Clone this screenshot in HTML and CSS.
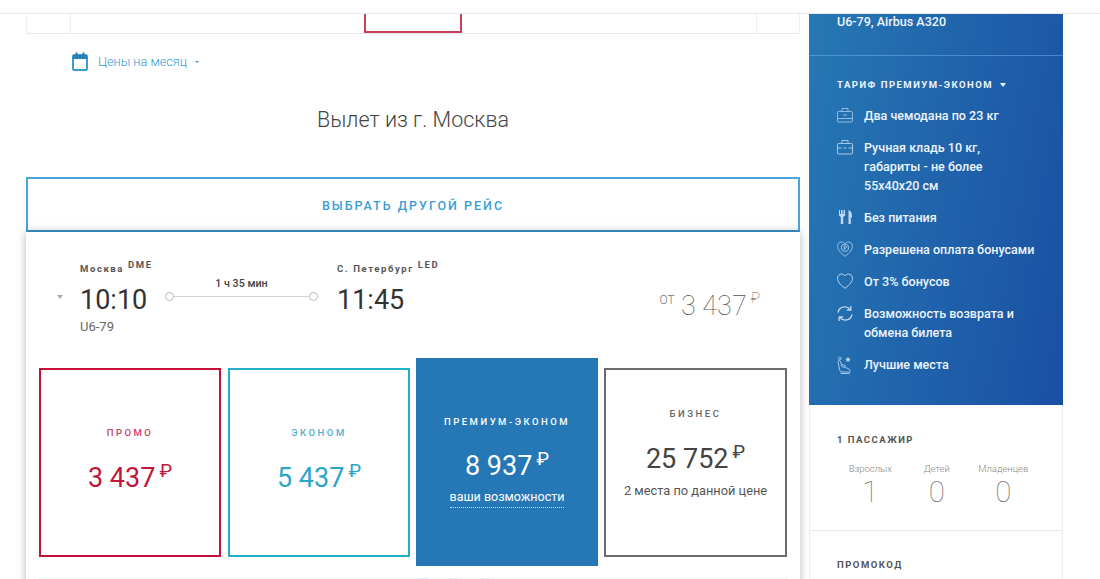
FILE: index.html
```html
<!DOCTYPE HTML>
<html>
<head>
    <meta charset="utf-8">
    <title>Выбор рейса</title>
    <link rel="stylesheet" href="styles.css">
</head>
<body>
    <div class="topBar"></div>
    <div class="page">
        <div class="main">
            <div class="dateRow">
                <div class="dateCell dateSmall"></div>
                <div class="dateCell dateWide"></div>
                <div class="dateCell dateActive"></div>
                <div class="dateCell dateWide2"></div>
                <div class="dateCell dateLast"></div>
            </div>

            <div class="monthLink">
                <svg class="calIcon" width="16" height="19" viewBox="0 0 16 19">
                    <rect x="1" y="3" width="14" height="15" rx="1.5" fill="none" stroke="#3a9bd0" stroke-width="2"/>
                    <rect x="1" y="3" width="14" height="4" fill="#2a7fb8"/>
                    <rect x="3.500" y="0.500" width="2" height="3" fill="#2a7fb8"/>
                    <rect x="10.500" y="0.500" width="2" height="3" fill="#2a7fb8"/>
                </svg>
                <span>Цены на месяц</span>
                <i class="caret"></i>
            </div>

            <h2 class="title">Вылет из г. Москва</h2>

            <button class="otherBtn">ВЫБРАТЬ ДРУГОЙ РЕЙС</button>

            <div class="flightCard">
                <div class="flightRow">
                    <i class="flightCaret"></i>
                    <div class="point">
                        <div class="city">Москва <sup>DME</sup></div>
                        <div class="time">10:10</div>
                        <div class="flightNo">U6-79</div>
                    </div>
                    <div class="route">
                        <div class="duration">1 ч 35 мин</div>
                        <div class="routeLine"></div>
                    </div>
                    <div class="point">
                        <div class="city">С. Петербург <sup>LED</sup></div>
                        <div class="time">11:45</div>
                    </div>
                    <div class="fromPrice"><small>ОТ</small> 3 437<sup>₽</sup></div>
                </div>

                <div class="tariffs">
                    <div class="tariff promo">
                        <div class="tariffName">ПРОМО</div>
                        <div class="tariffPrice">3 437<sup>₽</sup></div>
                    </div>
                    <div class="tariff econom">
                        <div class="tariffName">ЭКОНОМ</div>
                        <div class="tariffPrice">5 437<sup>₽</sup></div>
                    </div>
                    <div class="tariff premium">
                        <div class="tariffName">ПРЕМИУМ-ЭКОНОМ</div>
                        <div class="tariffPrice">8 937<sup>₽</sup></div>
                        <div class="tariffLink">ваши возможности</div>
                    </div>
                    <div class="tariff business">
                        <div class="tariffName">БИЗНЕС</div>
                        <div class="tariffPrice">25 752<sup>₽</sup></div>
                        <div class="tariffNote">2 места по данной цене</div>
                    </div>
                </div>
                <div class="cardBottom">
                    <span class="dot1"></span>
                    <span class="dot2"></span>
                    <span class="dot3"></span>
                </div>
            </div>
        </div>

        <div class="side">
            <div class="sideBlue">
                <div class="sideFlight">U6-79, Airbus A320</div>
                <div class="sideTariff">
                    <div class="sideHead">ТАРИФ ПРЕМИУМ-ЭКОНОМ <i class="headCaret"></i></div>
                    <ul class="options">
                        <li>
                            <svg width="16" height="16" viewBox="0 0 16 16" fill="none" stroke="#8fb9e0">
                                <rect x="0.500" y="4.500" width="15" height="10.500" rx="1"/>
                                <path d="M5 4.500V1.500h6v3M0.500 11.500h15M6 8h4"/>
                            </svg>
                            <span>Два чемодана по 23 кг</span>
                        </li>
                        <li>
                            <svg width="16" height="16" viewBox="0 0 16 16" fill="none" stroke="#a5c8e8">
                                <rect x="0.500" y="4.500" width="15" height="10.500" rx="1"/>
                                <path d="M5 4.500V1.500h6v3M0.500 9h4M11.500 9h4M6.500 9h3"/>
                            </svg>
                            <span>Ручная кладь 10 кг,<br>габариты - не более<br>55х40х20 см</span>
                        </li>
                        <li>
                            <svg width="16" height="16" viewBox="0 0 16 16" fill="#c3d9ef">
                                <path d="M2 1h1v4h1V1h1.500v4h1V1H8v5.500L6.200 8v7H3.800V8L2 6.500zM11.500 15V1c2 .5 3.500 2.500 3.500 6v1.500h-1.200V15z"/>
                            </svg>
                            <span>Без питания</span>
                        </li>
                        <li>
                            <svg width="16" height="16" viewBox="0 0 16 16" fill="none" stroke="#a5c8e8" stroke-width="0.900">
                                <path d="M8 15.300C2.800 11.500 0.600 8.300 0.600 5.200 0.600 2.800 2.300 1 4.500 1 6 1 7.300 1.700 8 2.900 8.700 1.700 10 1 11.500 1c2.200 0 3.900 1.800 3.900 4.200 0 3.100-2.200 6.300-7.400 10.100z"/>
                                <circle cx="8" cy="6.800" r="3.700"/>
                                <path d="M7.200 9V5h1.100a1.100 1.100 0 0 1 0 2.300H7.200"/>
                            </svg>
                            <span>Разрешена оплата бонусами</span>
                        </li>
                        <li>
                            <svg width="16" height="16" viewBox="0 0 16 16" fill="none" stroke="#c3d9ef">
                                <path d="M8 15.300C2.800 11.500 0.600 8.300 0.600 5.200 0.600 2.800 2.300 1 4.500 1 6 1 7.300 1.700 8 2.900 8.700 1.700 10 1 11.500 1c2.200 0 3.900 1.800 3.900 4.200 0 3.100-2.200 6.300-7.400 10.100z"/>
                            </svg>
                            <span>От 3% бонусов</span>
                        </li>
                        <li>
                            <svg width="16" height="17" viewBox="0 0 17 17" fill="none" stroke="#c3d9ef" stroke-width="1.400">
                                <path d="M1 7.500C1.700 4 4.700 1.500 8.300 1.500c2.500 0 4.500 1 5.900 2.800M16 9.500c-.7 3.500-3.700 6-7.300 6-2.500 0-4.500-1-5.900-2.800"/>
                                <path d="M14.700 0.500v4.300h-4.200M2.300 16.500v-4.300h4.200"/>
                            </svg>
                            <span>Возможность возврата и<br>обмена билета</span>
                        </li>
                        <li>
                            <svg width="16" height="18" viewBox="0 0 16 18" fill="none" stroke="#a5c8e8">
                                <circle cx="2.800" cy="2.500" r="1.300"/>
                                <path d="M1 5.500c0-1 2-1.500 2.500 0l1.500 5 3 1c1.500.5 4 1 5 2.500.5 1 0 2-1 2H5c-1 0-2-.7-2.300-2L1 5.500zM5 8.500l4 1.500M4 16.500v1h8.500v-1"/>
                                <path d="M11 0.700l.8 1.800 1.900.2-1.400 1.300.4 1.900-1.700-1-1.700 1 .4-1.900-1.400-1.300 1.900-.2z" fill="#c3d9ef" stroke="none"/>
                            </svg>
                            <span>Лучшие места</span>
                        </li>
                    </ul>
                </div>
            </div>

            <div class="sideBlock passengers">
                <div class="blockHead">1 ПАССАЖИР</div>
                <div class="paxRow">
                    <div class="pax"><span>Взрослых</span><b>1</b></div>
                    <div class="pax"><span>Детей</span><b>0</b></div>
                    <div class="pax"><span>Младенцев</span><b>0</b></div>
                </div>
            </div>
            <div class="sideBlock promoBlock">
                <div class="blockHead">ПРОМОКОД</div>
            </div>
        </div>
    </div>
</body>
</html>
```

FILE: styles.css
```css
html, body {
    margin: 0;
    height: 579px;
    overflow: hidden;
    background: #fff;
    font-family: Roboto, "Liberation Sans", sans-serif;
    color: #444;
}

.topBar {
    height: 13px;
    border-bottom: 1px solid #e8e8e8;
}

.page {
    display: flex;
    padding-left: 26px;
}

/* left column */
.main {
    width: 774px;
    flex: none;
}

.dateRow {
    display: flex;
    height: 19px;
    border-bottom: 1px solid #e8e8e8;
    border-left: 1px solid #eee;
    border-right: 1px solid #eee;
}

.dateCell {
    border-right: 1px solid #eee;
}

.dateSmall { width: 43px; }
.dateWide { width: 293px; border-right: 0; }
.dateActive {
    width: 94px;
    border: 2px solid #c9405f;
    border-top: 0;
    height: 17px;
}
.dateWide2 { width: 294px; }
.dateLast { flex: 1; border-right: 0; }

.monthLink {
    display: flex;
    align-items: center;
    height: 19px;
    margin: 18px 0 0 46px;
    font-size: 12.700px;
    font-weight: 300;
    color: #3a9bd6;
}

.calIcon { margin-right: 10px; }

.caret {
    width: 0;
    height: 0;
    margin-left: 8px;
    border: 2.500px solid transparent;
    border-top-color: #3a9bd6;
    border-bottom: 0;
}

.title {
    margin: 35px 0 0;
    height: 28px;
    text-align: center;
    font-size: 21.500px;
    line-height: 28px;
    font-weight: 300;
    color: #444;
}

.otherBtn {
    display: block;
    box-sizing: border-box;
    width: 774px;
    height: 55px;
    margin-top: 43px;
    padding-top: 2px;
    border: 2px solid #47a5d8;
    border-bottom-color: #3a95c6;
    background: #fff;
    font-family: Roboto, sans-serif;
    font-size: 12.500px;
    font-weight: 500;
    letter-spacing: 2px;
    color: #3a9ed6;
}

.flightCard {
    height: 360px;
    background: #fff;
    box-shadow: 0 0 9px rgba(0, 0, 0, 0.28);
}

.flightRow {
    display: flex;
    height: 126px;
    box-sizing: border-box;
    padding: 28px 0 0 54px;
    position: relative;
}

.flightCaret {
    position: absolute;
    left: 31px;
    top: 63px;
    width: 0;
    height: 0;
    border: 3px solid transparent;
    border-top: 4px solid #aaa;
    border-bottom: 0;
}

.point { width: 85px; }

.city {
    font-size: 9.500px;
    line-height: 18px;
    font-weight: 700;
    letter-spacing: 1.600px;
    color: #555;
    white-space: nowrap;
}

.city sup {
    font-size: 9.500px;
    line-height: 0;
    vertical-align: 4px;
}

.time {
    font-size: 27px;
    line-height: 31px;
    margin-top: 7px;
    color: #333;
}

.flightNo {
    margin-top: 3px;
    font-size: 13px;
    line-height: 15px;
    color: #666;
}

.route {
    width: 153px;
    margin-right: 19px;
    text-align: center;
}

.duration {
    margin-top: 17px;
    font-size: 10.700px;
    line-height: 13px;
    font-weight: 500;
    color: #444;
}

.routeLine {
    position: relative;
    height: 1px;
    margin-top: 6px;
    background: #d5d5d5;
}

.routeLine:before, .routeLine:after {
    content: "";
    position: absolute;
    top: -4px;
    width: 7px;
    height: 7px;
    border: 1px solid #bbb;
    border-radius: 50%;
    background: #fff;
}

.routeLine:before { left: 0; }
.routeLine:after { right: 0; }

.fromPrice {
    margin-left: auto;
    margin-right: 40px;
    margin-top: 25px;
    height: 30px;
    font-size: 27px;
    line-height: 30px;
    font-weight: 100;
    color: #555;
    white-space: nowrap;
}

.fromPrice small {
    font-size: 12px;
    font-weight: 300;
    vertical-align: 11px;
    color: #777;
}

.fromPrice sup {
    font-size: 15px;
    line-height: 0;
    vertical-align: 12px;
    margin-left: 4px;
}

.tariffs {
    display: flex;
    align-items: center;
    gap: 6px;
    padding-left: 13px;
    height: 208px;
}

.tariff {
    box-sizing: border-box;
    width: 182px;
    height: 189px;
    padding-bottom: 2px;
    border: 2px solid;
    display: flex;
    flex-direction: column;
    align-items: center;
    justify-content: center;
}

.tariffName {
    font-size: 9.500px;
    line-height: 12px;
    letter-spacing: 2.500px;
    font-weight: 500;
}

.tariffPrice {
    margin-top: 22px;
    font-size: 27px;
    line-height: 34px;
    white-space: nowrap;
}

.tariffPrice sup {
    font-size: 19px;
    line-height: 0;
    vertical-align: 10px;
    margin-left: 4px;
}

.promo { border-color: #c5103a; color: #c0163c; }
.promo .tariffName { color: #c8405f; }
.econom { margin-left: 1px; border-color: #20aecb; color: #2ba6c6; }
.econom .tariffName { color: #4bb0cd; }

.premium {
    height: 208px;
    padding-bottom: 0;
    border-color: #2677b5;
    background: #2677b5;
    color: #fff;
}

.premium .tariffPrice { margin-top: 21px; }

.tariffLink {
    margin-top: 5px;
    padding-bottom: 1px;
    border-bottom: 1px dotted #cfe0f0;
    font-size: 12.500px;
    line-height: 18px;
}

.business {
    width: 183px;
    padding-bottom: 17px;
    border-color: #6b6b6b;
    color: #444;
}

.business .tariffName { color: #666; }

.tariffNote {
    margin-top: 6px;
    font-size: 12.800px;
    line-height: 18px;
    color: #555;
}

.cardBottom {
    display: flex;
    margin: 12px 12px 0;
    height: 1px;
    background: #eef6fb;
}

.cardBottom span {
    height: 1px;
    background: #dcebf6;
}

.dot1 { width: 10px; margin-left: 380px; }
.dot2 { width: 8px; margin-left: 22px; }
.dot3 { width: 8px; margin-left: 24px; }

/* right column */
.side {
    box-sizing: border-box;
    width: 254px;
    flex: none;
    margin-left: 9px;
}

.sideBlue {
    height: 391px;
    background: linear-gradient(100deg, #2678b4, #1a4fa3);
    color: #eef4fb;
}

.sideFlight {
    height: 42px;
    box-sizing: border-box;
    padding-left: 28px;
    font-size: 12.550px;
    line-height: 15px;
    font-weight: 500;
    border-bottom: 1px solid rgba(120, 180, 235, 0.5);
}

.sideTariff { padding: 23px 0 0 28px; }

.sideHead {
    font-size: 9.500px;
    line-height: 12px;
    font-weight: 700;
    letter-spacing: 1.500px;
    white-space: nowrap;
}

.headCaret {
    display: inline-block;
    width: 0;
    height: 0;
    margin-left: 3px;
    vertical-align: 1px;
    border: 3px solid transparent;
    border-top: 4px solid #eef4fb;
    border-bottom: 0;
}

.options {
    list-style: none;
    margin: 15px 0 0;
    padding: 0;
}

.options li {
    display: flex;
    margin-bottom: 13px;
    font-size: 12.550px;
    line-height: 19px;
    font-weight: 500;
}

.options svg {
    flex: none;
    margin-right: 11px;
    margin-top: 1px;
}

.sideBlock {
    border-left: 1px solid #eee;
    border-right: 1px solid #eee;
}

.passengers {
    box-sizing: border-box;
    height: 126px;
    padding: 29px 0 0 27px;
    border-bottom: 1px solid #e8e8e8;
}

.blockHead {
    font-size: 9.500px;
    line-height: 12px;
    font-weight: 700;
    letter-spacing: 1.500px;
    color: #555;
}

.paxRow {
    display: flex;
    margin-top: 17px;
}

.pax {
    width: 66.500px;
    display: flex;
    flex-direction: column;
    align-items: center;
    white-space: nowrap;
}

.pax span {
    font-size: 9.500px;
    line-height: 12px;
    font-weight: 300;
    color: #888;
}

.pax b {
    font-size: 29.500px;
    line-height: 34px;
    font-weight: 100;
    color: #777;
}

.promoBlock {
    height: 60px;
    box-sizing: border-box;
    padding: 28px 0 0 27px;
}
```
